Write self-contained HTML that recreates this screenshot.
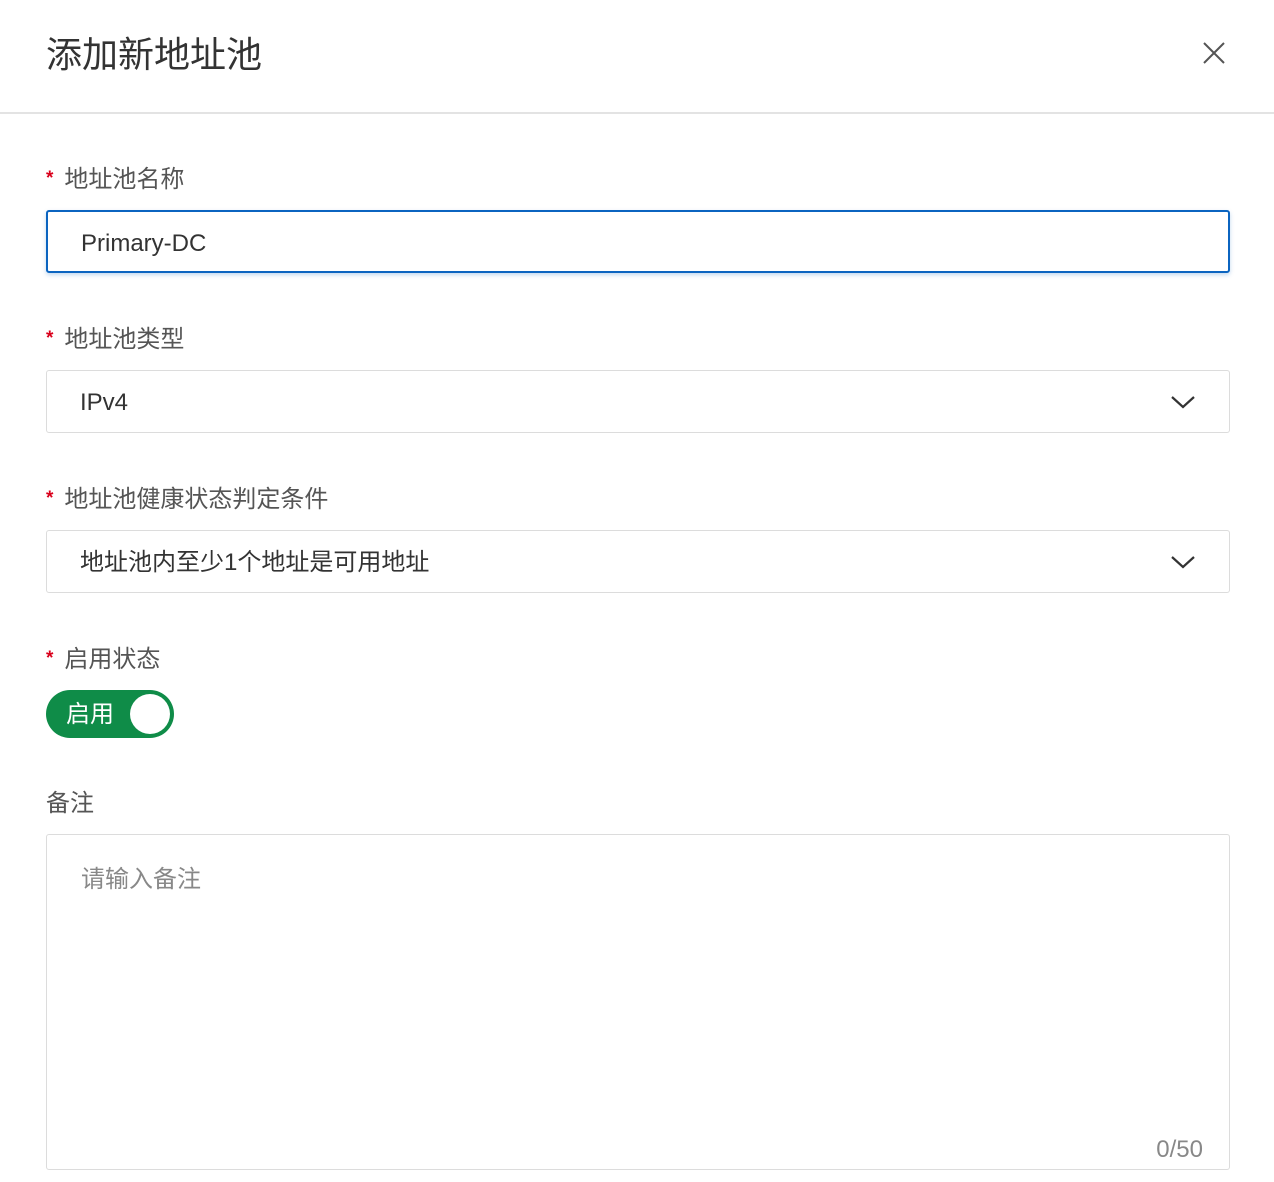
<!DOCTYPE html>
<html><head><meta charset="utf-8"><style>
*{box-sizing:border-box;margin:0;padding:0}
body{width:1274px;height:1182px;background:#fff;font-family:"Liberation Sans","Noto Sans CJK SC",sans-serif;color:#333;position:relative;overflow:hidden}
.a{position:absolute}
.title{left:46px;top:32px;font-size:36px;line-height:46px;color:#333}
.hr{left:0;top:112px;width:1274px;height:2px;background:#e3e3e3}
.lab{left:46px;font-size:24px;line-height:30px;color:#555}
.lab b{color:#d9001b;font-weight:bold;font-size:19px;position:relative;top:-3px;margin-right:11px}
.box{left:46px;width:1184px;height:63px;border:1.5px solid #dcdcdc;border-radius:3px;font-size:24px;line-height:63px;padding-left:33px;color:#333}
.chev{position:absolute;right:34px;top:23px}
</style></head><body>
<div class="a title">添加新地址池</div>
<svg class="a" style="left:1202px;top:41px" width="24" height="24" viewBox="0 0 24 24"><path d="M2 2L22 22M22 2L2 22" stroke="#555" stroke-width="2" fill="none"/></svg>
<div class="a hr"></div>
<div class="a lab" style="top:165px"><b>*</b>地址池名称</div>
<div class="a box" style="top:210px;border:2px solid #0b64c0;box-shadow:0 2px 4px rgba(11,100,192,.25)">Primary-DC</div>
<div class="a lab" style="top:325px"><b>*</b>地址池类型</div>
<div class="a box" style="top:370px">IPv4<svg class="chev" width="24" height="16" viewBox="0 0 24 16"><path d="M1 3L12 13L23 3" stroke="#333" stroke-width="2.2" fill="none"/></svg></div>
<div class="a lab" style="top:485px"><b>*</b>地址池健康状态判定条件</div>
<div class="a box" style="top:530px">地址池内至少1个地址是可用地址<svg class="chev" width="24" height="16" viewBox="0 0 24 16"><path d="M1 3L12 13L23 3" stroke="#333" stroke-width="2.2" fill="none"/></svg></div>
<div class="a lab" style="top:645px"><b>*</b>启用状态</div>
<div class="a" style="left:46px;top:690px;width:128px;height:48px;border-radius:24px;background:#0f8c48">
<span class="a" style="left:20px;top:10px;font-size:24px;line-height:30px;color:#fff">启用</span>
<span class="a" style="left:84px;top:4px;width:40px;height:40px;border-radius:50%;background:#fff"></span></div>
<div class="a lab" style="top:789px;left:46px">备注</div>
<div class="a" style="left:46px;top:834px;width:1184px;height:336px;border:1.5px solid #dcdcdc;border-radius:3px">
<span class="a" style="left:34px;top:30px;font-size:24px;line-height:30px;color:#888">请输入备注</span>
<span class="a" style="right:26px;top:300px;font-size:24px;line-height:30px;color:#888">0/50</span></div>
</body></html>
